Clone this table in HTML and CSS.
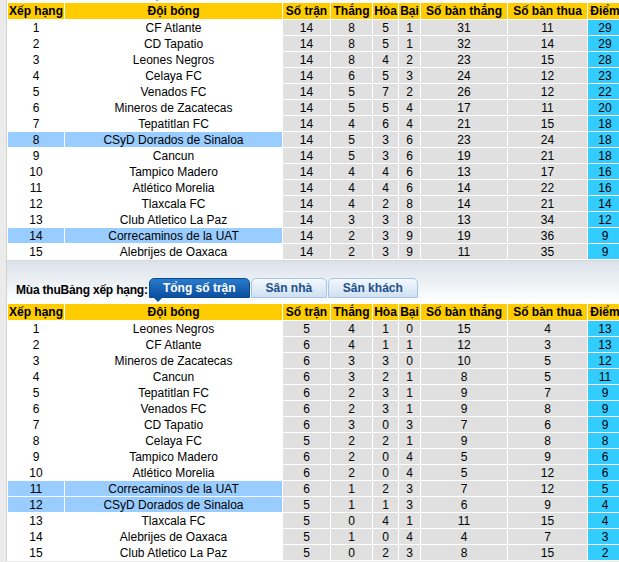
FILE: index.html
```html
<!DOCTYPE html>
<html lang="vi">
<head>
<meta charset="utf-8">
<title>Bảng xếp hạng</title>
<link rel="stylesheet" href="styles.css">
</head>
<body>
<div class="page">
  <span class="top-tip"></span>
  <table class="standings">
    <colgroup><col class="c-rank"><col class="c-team"><col class="c-played"><col class="c-win"><col class="c-draw"><col class="c-loss"><col class="c-gf"><col class="c-ga"><col class="c-pts"></colgroup>
    <thead><tr><th>Xếp hạng</th><th>Đội bóng</th><th>Số trận</th><th>Thắng</th><th>Hòa</th><th>Bại</th><th>Số bàn thắng</th><th>Số bàn thua</th><th>Điểm</th></tr></thead>
    <tbody>
      <tr><td>1</td><td>CF Atlante</td><td class="n">14</td><td class="n">8</td><td class="n">5</td><td class="n">1</td><td class="n">31</td><td class="n">11</td><td class="p">29</td></tr>
      <tr><td>2</td><td>CD Tapatio</td><td class="n">14</td><td class="n">8</td><td class="n">5</td><td class="n">1</td><td class="n">32</td><td class="n">14</td><td class="p">29</td></tr>
      <tr><td>3</td><td>Leones Negros</td><td class="n">14</td><td class="n">8</td><td class="n">4</td><td class="n">2</td><td class="n">23</td><td class="n">15</td><td class="p">28</td></tr>
      <tr><td>4</td><td>Celaya FC</td><td class="n">14</td><td class="n">6</td><td class="n">5</td><td class="n">3</td><td class="n">24</td><td class="n">12</td><td class="p">23</td></tr>
      <tr><td>5</td><td>Venados FC</td><td class="n">14</td><td class="n">5</td><td class="n">7</td><td class="n">2</td><td class="n">26</td><td class="n">12</td><td class="p">22</td></tr>
      <tr><td>6</td><td>Mineros de Zacatecas</td><td class="n">14</td><td class="n">5</td><td class="n">5</td><td class="n">4</td><td class="n">17</td><td class="n">11</td><td class="p">20</td></tr>
      <tr><td>7</td><td>Tepatitlan FC</td><td class="n">14</td><td class="n">4</td><td class="n">6</td><td class="n">4</td><td class="n">21</td><td class="n">15</td><td class="p">18</td></tr>
      <tr class="hl"><td>8</td><td>CSyD Dorados de Sinaloa</td><td class="n">14</td><td class="n">5</td><td class="n">3</td><td class="n">6</td><td class="n">23</td><td class="n">24</td><td class="p">18</td></tr>
      <tr><td>9</td><td>Cancun</td><td class="n">14</td><td class="n">5</td><td class="n">3</td><td class="n">6</td><td class="n">19</td><td class="n">21</td><td class="p">18</td></tr>
      <tr><td>10</td><td>Tampico Madero</td><td class="n">14</td><td class="n">4</td><td class="n">4</td><td class="n">6</td><td class="n">13</td><td class="n">17</td><td class="p">16</td></tr>
      <tr><td>11</td><td>Atlético Morelia</td><td class="n">14</td><td class="n">4</td><td class="n">4</td><td class="n">6</td><td class="n">14</td><td class="n">22</td><td class="p">16</td></tr>
      <tr><td>12</td><td>Tlaxcala FC</td><td class="n">14</td><td class="n">4</td><td class="n">2</td><td class="n">8</td><td class="n">14</td><td class="n">21</td><td class="p">14</td></tr>
      <tr><td>13</td><td>Club Atletico La Paz</td><td class="n">14</td><td class="n">3</td><td class="n">3</td><td class="n">8</td><td class="n">13</td><td class="n">34</td><td class="p">12</td></tr>
      <tr class="hl"><td>14</td><td>Correcaminos de la UAT</td><td class="n">14</td><td class="n">2</td><td class="n">3</td><td class="n">9</td><td class="n">19</td><td class="n">36</td><td class="p">9</td></tr>
      <tr><td>15</td><td>Alebrijes de Oaxaca</td><td class="n">14</td><td class="n">2</td><td class="n">3</td><td class="n">9</td><td class="n">11</td><td class="n">35</td><td class="p">9</td></tr>
    </tbody>
  </table>

  <div class="season">
    <span class="season-label">Mùa thuBảng xếp hạng:</span>
    <div class="tabs">
      <span class="tab active">Tổng số trận</span>
      <span class="tab home">Sân nhà</span>
      <span class="tab away">Sân khách</span>
    </div>
  </div>

  <table class="standings">
    <colgroup><col class="c-rank"><col class="c-team"><col class="c-played"><col class="c-win"><col class="c-draw"><col class="c-loss"><col class="c-gf"><col class="c-ga"><col class="c-pts"></colgroup>
    <thead><tr><th>Xếp hạng</th><th>Đội bóng</th><th>Số trận</th><th>Thắng</th><th>Hòa</th><th>Bại</th><th>Số bàn thắng</th><th>Số bàn thua</th><th>Điểm</th></tr></thead>
    <tbody>
      <tr><td>1</td><td>Leones Negros</td><td class="n">5</td><td class="n">4</td><td class="n">1</td><td class="n">0</td><td class="n">15</td><td class="n">4</td><td class="p">13</td></tr>
      <tr><td>2</td><td>CF Atlante</td><td class="n">6</td><td class="n">4</td><td class="n">1</td><td class="n">1</td><td class="n">12</td><td class="n">3</td><td class="p">13</td></tr>
      <tr><td>3</td><td>Mineros de Zacatecas</td><td class="n">6</td><td class="n">3</td><td class="n">3</td><td class="n">0</td><td class="n">10</td><td class="n">5</td><td class="p">12</td></tr>
      <tr><td>4</td><td>Cancun</td><td class="n">6</td><td class="n">3</td><td class="n">2</td><td class="n">1</td><td class="n">8</td><td class="n">5</td><td class="p">11</td></tr>
      <tr><td>5</td><td>Tepatitlan FC</td><td class="n">6</td><td class="n">2</td><td class="n">3</td><td class="n">1</td><td class="n">9</td><td class="n">7</td><td class="p">9</td></tr>
      <tr><td>6</td><td>Venados FC</td><td class="n">6</td><td class="n">2</td><td class="n">3</td><td class="n">1</td><td class="n">9</td><td class="n">8</td><td class="p">9</td></tr>
      <tr><td>7</td><td>CD Tapatio</td><td class="n">6</td><td class="n">3</td><td class="n">0</td><td class="n">3</td><td class="n">7</td><td class="n">6</td><td class="p">9</td></tr>
      <tr><td>8</td><td>Celaya FC</td><td class="n">5</td><td class="n">2</td><td class="n">2</td><td class="n">1</td><td class="n">9</td><td class="n">8</td><td class="p">8</td></tr>
      <tr><td>9</td><td>Tampico Madero</td><td class="n">6</td><td class="n">2</td><td class="n">0</td><td class="n">4</td><td class="n">5</td><td class="n">9</td><td class="p">6</td></tr>
      <tr><td>10</td><td>Atlético Morelia</td><td class="n">6</td><td class="n">2</td><td class="n">0</td><td class="n">4</td><td class="n">5</td><td class="n">12</td><td class="p">6</td></tr>
      <tr class="hl"><td>11</td><td>Correcaminos de la UAT</td><td class="n">6</td><td class="n">1</td><td class="n">2</td><td class="n">3</td><td class="n">7</td><td class="n">12</td><td class="p">5</td></tr>
      <tr class="hl"><td>12</td><td>CSyD Dorados de Sinaloa</td><td class="n">5</td><td class="n">1</td><td class="n">1</td><td class="n">3</td><td class="n">6</td><td class="n">9</td><td class="p">4</td></tr>
      <tr><td>13</td><td>Tlaxcala FC</td><td class="n">5</td><td class="n">0</td><td class="n">4</td><td class="n">1</td><td class="n">11</td><td class="n">15</td><td class="p">4</td></tr>
      <tr><td>14</td><td>Alebrijes de Oaxaca</td><td class="n">5</td><td class="n">1</td><td class="n">0</td><td class="n">4</td><td class="n">4</td><td class="n">7</td><td class="p">3</td></tr>
      <tr><td>15</td><td>Club Atletico La Paz</td><td class="n">5</td><td class="n">0</td><td class="n">2</td><td class="n">3</td><td class="n">8</td><td class="n">15</td><td class="p">2</td></tr>
    </tbody>
  </table>
</div>
</body>
</html>
```

FILE: styles.css
```css
html, body {
  margin: 0;
  padding: 0;
}
body {
  background: #ebebeb;
  font-family: "Liberation Sans", Arial, sans-serif;
  font-size: 12px;
  color: #000;
  overflow: hidden;
}
.page {
  position: relative;
  margin-left: 6px;
  border-left: 1px solid #d2d2d2;
  background: #fff;
  width: 640px;
  padding-top: 2px;
}
.top-tip {
  position: absolute;
  left: 146px;
  top: -3px;
  width: 0;
  height: 0;
  border-left: 4px solid transparent;
  border-right: 4px solid transparent;
  border-top: 4px solid #0b55a6;
}
.standings {
  border-collapse: separate;
  border-spacing: 1px;
  table-layout: fixed;
  width: 616px;
}
.c-rank { width: 56px; }
.c-team { width: 217px; }
.c-played { width: 47px; }
.c-win { width: 41px; }
.c-draw { width: 25px; }
.c-loss { width: 21px; }
.c-gf { width: 86px; }
.c-ga { width: 79px; }
.c-pts { width: 34px; }
.standings th {
  background: #ffcc00;
  font-weight: bold;
  height: 16px;
  line-height: 16px;
  padding: 0;
  text-align: center;
  white-space: nowrap;
  overflow: hidden;
}
.standings td {
  height: 15px;
  box-sizing: border-box;
  line-height: 14px;
  padding: 1px 0 0;
  text-align: center;
  white-space: nowrap;
  background: #fff;
}
.standings td.n {
  background: #e0e0e0;
}
.standings td.p {
  background: #33ccff;
}
.standings tr.hl td:not(.n):not(.p) {
  background: #99ccff;
}
.season {
  box-sizing: border-box;
  height: 43px;
  border-top: 1px solid #d8d8d8;
  background: linear-gradient(#dbe2ea 0%, #eef2f6 55%, #ffffff 100%);
  display: flex;
  align-items: flex-end;
  padding-left: 9px;
  padding-bottom: 5px;
}
.season-label {
  font-weight: bold;
  font-size: 12px;
  letter-spacing: -0.2px;
  line-height: 14px;
  padding-bottom: 1px;
  white-space: nowrap;
}
.tabs {
  display: flex;
  gap: 1px;
  margin-left: 1px;
}
.tab {
  position: relative;
  display: block;
  height: 20px;
  line-height: 17px;
  padding-top: 1px;
  box-sizing: border-box;
  text-align: center;
  font-weight: bold;
  font-size: 12px;
  border-radius: 5px 5px 0 0;
  white-space: nowrap;
}
.tab.active {
  width: 101px;
  color: #fff;
  background: linear-gradient(#2b7bcb, #0b4f9f);
  border: 1px solid #0a4a94;
}
.tab.active::after {
  content: "";
  position: absolute;
  left: 3px;
  bottom: -5px;
  width: 0;
  height: 0;
  border-left: 5px solid transparent;
  border-right: 5px solid transparent;
  border-top: 5px solid #0b4f9f;
}
.tab.home,
.tab.away {
  color: #1d4f8b;
  background: linear-gradient(#f3f8fd, #cfe0f2);
  border: 1px solid #a7c5e5;
}
.tab.home { width: 76px; }
.tab.away { width: 90px; }
```
